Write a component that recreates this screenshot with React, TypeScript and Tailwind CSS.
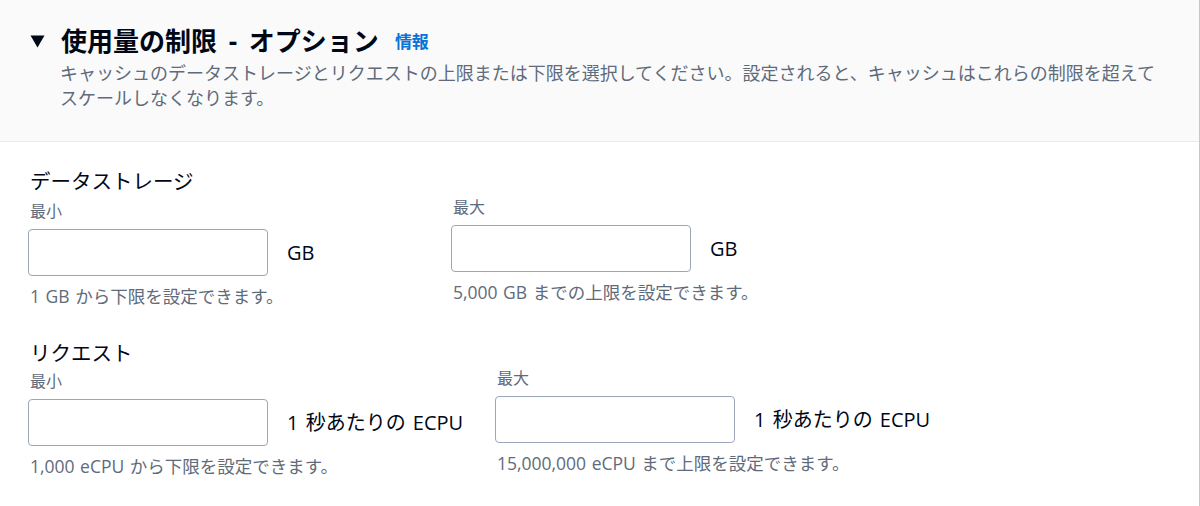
const font = { fontFamily: '"Open Sans", "Noto Sans CJK JP", sans-serif' };

function Field({ label, unit, hint }: { label: string; unit: string; hint: string }) {
    return (
        <div className="flex flex-col">
            <div className="text-[16px] leading-[20px] text-[#5f6b7a] pl-[2px]">{label}</div>
            <div className="flex items-center mt-[8px]">
                <input className="w-[240px] h-[47px] rounded-[4px] border border-[#9ba7b6] bg-white outline-none" />
                <span className="ml-[19px] text-[20px] text-[#000716] [word-spacing:2px]">{unit}</span>
            </div>
            <div className="mt-[10px] text-[17.5px] leading-[20px] text-[#5f6b7a] pl-[2px] [word-spacing:1px]">{hint}</div>
        </div>
    );
}

export default function App() {
    return (
        <div className="w-[1200px] h-[506px] bg-white border-r border-[#c6c6cd] overflow-hidden" style={font}>
            <div className="bg-[#fafafa] border-b border-[#e9ebed] h-[142px] pt-[27px] pl-[30px]">
                <div className="flex items-center">
                    <svg width="15" height="13" viewBox="0 0 15 13" className="shrink-0">
                        <path d="M0.5 0.5 H14.5 L7.5 12.5 Z" fill="#000716" />
                    </svg>
                    <h2 className="ml-[16px] text-[26px] leading-[28px] font-bold text-[#000716] [word-spacing:5px]">使用量の制限 - オプション</h2>
                    <a className="ml-[16px] text-[17px] font-bold text-[#0972d3] mt-[2px]">情報</a>
                </div>
                <p className="mt-[6px] ml-[30px] w-[1100px] text-[18px] leading-[25px] text-[#5f6b7a]">
                    キャッシュのデータストレージとリクエストの上限または下限を選択してください。設定されると、キャッシュはこれらの制限を超えてスケールしなくなります。
                </p>
            </div>

            <div className="pl-[28px] pt-[27px]">
                <div className="text-[20.5px] leading-[24px] text-[#000716] pl-[2px]">データストレージ</div>
                <div className="flex items-start mt-[8px]">
                    <div className="w-[423px]">
                        <Field label="最小" unit="GB" hint="1 GB から下限を設定できます。" />
                    </div>
                    <div className="-mt-[4px]">
                        <Field label="最大" unit="GB" hint="5,000 GB までの上限を設定できます。" />
                    </div>
                </div>

                <div className="mt-[35px] text-[20.5px] leading-[24px] text-[#000716] pl-[2px]">リクエスト</div>
                <div className="flex items-start mt-[6px]">
                    <div className="w-[467px]">
                        <Field label="最小" unit="1 秒あたりの ECPU" hint="1,000 eCPU から下限を設定できます。" />
                    </div>
                    <div className="-mt-[3px]">
                        <Field label="最大" unit="1 秒あたりの ECPU" hint="15,000,000 eCPU まで上限を設定できます。" />
                    </div>
                </div>
            </div>
        </div>
    );
}
